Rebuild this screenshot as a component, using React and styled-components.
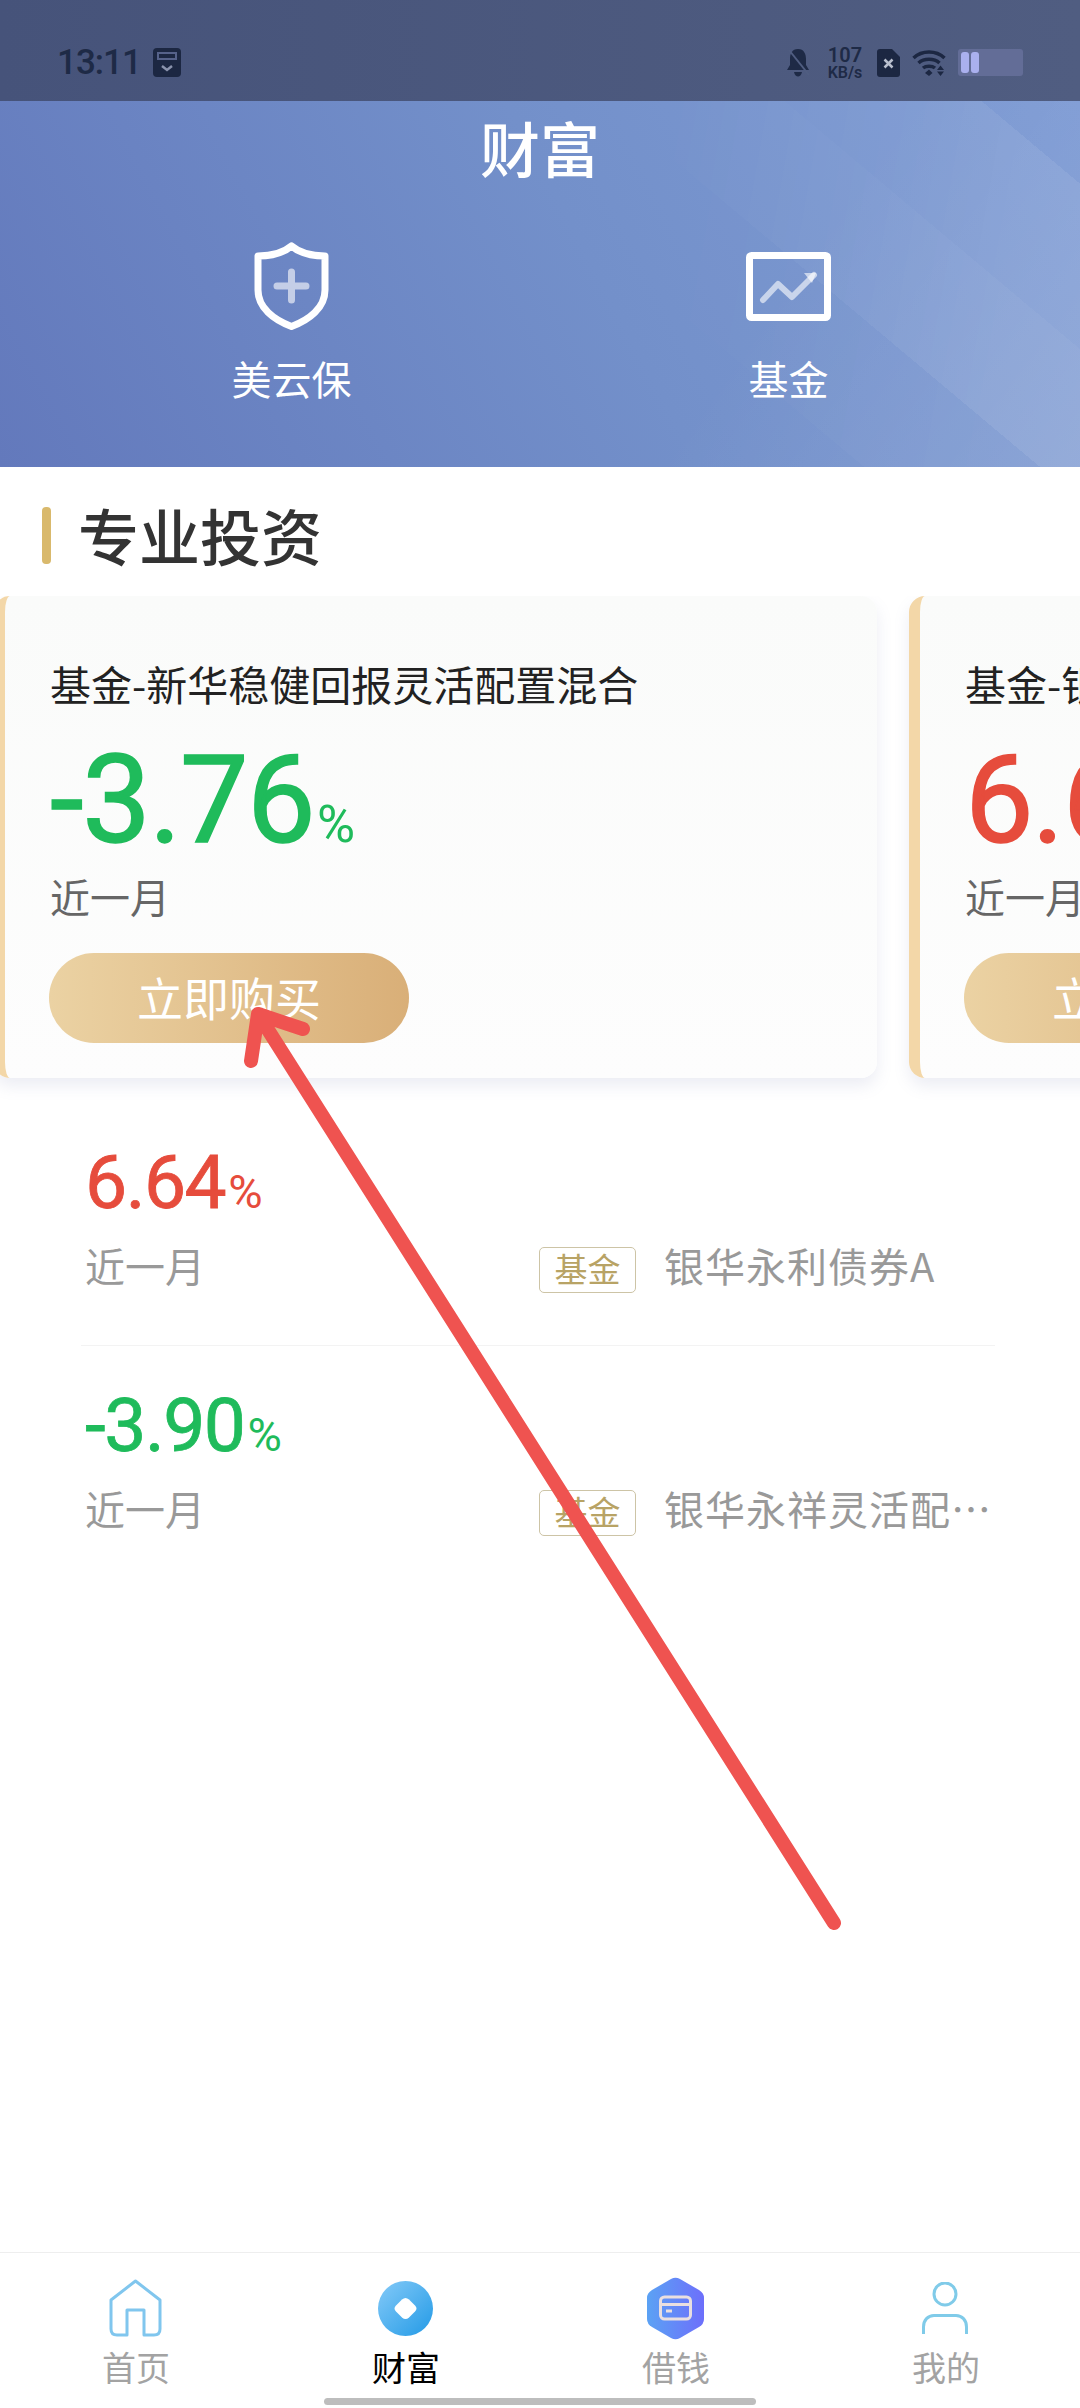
import React from 'react';
import styled, { createGlobalStyle } from 'styled-components';

const cjk = '"Noto Sans CJK SC", "Noto Sans", sans-serif';
const num = 'Roboto, "Liberation Sans", sans-serif';

const GlobalStyle = createGlobalStyle`
  html, body { margin: 0; padding: 0; background: #fff; }
  * { box-sizing: border-box; }
`;

const Page = styled.div`
  position: relative;
  width: 1080px;
  height: 2408px;
  overflow: hidden;
  display: flex;
  flex-direction: column;
  background: #fff;
  font-family: ${cjk};
`;

const StatusBar = styled.div`
  height: 101px;
  flex: none;
  padding: 26px 57px 0;
  display: flex;
  justify-content: space-between;
  align-items: center;
  background: linear-gradient(90deg, #46537a 0%, #505d81 100%);
  & > div { display: flex; align-items: center; }
  padding-bottom: 2px;
`;

const Time = styled.span`
  font: 500 35px ${num};
  letter-spacing: -1px;
  color: #1e2a46;
  margin-right: 12px;
`;

const StatusRight = styled.div`
  gap: 12px;
`;

const Speed = styled.div`
  display: flex;
  flex-direction: column;
  align-items: center;
  width: 40px;
  margin-left: 3px;
  color: #1e2a46;
  font-family: ${num};
  font-weight: 600;
  & b { font-size: 20px; line-height: 19px; font-weight: 600; }
  & i { font-size: 16px; line-height: 15px; font-style: normal; }
`;

const Battery = styled.div`
  width: 65px;
  height: 27px;
  padding-left: 3px;
  display: flex;
  align-items: center;
  gap: 2px;
  border-radius: 3px;
  background: #636d97;
`;

const BatteryCell = styled.span`
  width: 8px;
  height: 21px;
  border-radius: 3px;
  background: #aab0ee;
`;

const Header = styled.header`
  position: relative;
  height: 366px;
  flex: none;
  padding-top: 11px;
  color: #fff;
  background:
    linear-gradient(125deg, rgba(255, 255, 255, 0) 68%, rgba(255, 255, 255, 0.1) 100%),
    linear-gradient(62deg, #6379bc 0%, #7390ca 55%, #7e9bd4 100%);

  /* diagonal light bands, fading out towards the top left */
  &::before {
    content: '';
    position: absolute;
    inset: 0;
    background: linear-gradient(40deg,
      transparent 57%,
      rgba(255, 255, 255, 0.035) 57%, rgba(255, 255, 255, 0.035) 68.6%,
      rgba(255, 255, 255, 0.11) 68.6%, rgba(255, 255, 255, 0.11) 80.5%,
      rgba(255, 255, 255, 0.08) 80.5%, rgba(255, 255, 255, 0.08) 93.5%,
      transparent 93.5%);
    mask-image: linear-gradient(100deg, transparent 58%, #000 92%);
  }
  & > * { position: relative; }
`;

const Title = styled.h1`
  margin: 0;
  font-size: 60px;
  font-weight: 500;
  line-height: 70px;
  text-align: center;
`;

const Shortcuts = styled.div`
  margin-top: 60px;
  padding: 0 43px;
  display: grid;
  grid-template-columns: 1fr 1fr;
`;

const Shortcut = styled.div`
  display: flex;
  flex-direction: column;
  align-items: center;
`;

const ShortcutIcon = styled.div`
  height: 88px;
  display: flex;
  align-items: center;
`;

const ShortcutLabel = styled.span`
  margin-top: 23px;
  font-size: 40px;
  line-height: 50px;
`;

const SectionHead = styled.div`
  margin-top: 40px;
  padding-left: 42px;
  height: 57px;
  display: flex;
  align-items: center;
  gap: 27px;
`;

const SectionBar = styled.span`
  width: 9px;
  height: 57px;
  border-radius: 4px;
  background: #d9b96c;
`;

const SectionTitle = styled.h2`
  margin: 0 0 3px;
  font-size: 61px;
  font-weight: 500;
  line-height: 57px;
  color: #333;
`;

const Scroller = styled.div`
  margin: 32px 0 0 -6px;
  padding-bottom: 25px;
  display: flex;
  gap: 32px;
  overflow: hidden;
`;

const Card = styled.div`
  flex: none;
  width: 883px;
  height: 482px;
  padding: 59px 0 0 45px;
  border-left: 11px solid #f3d7a8;
  border-radius: 16px;
  background: linear-gradient(180deg, #fafbfa 0%, #fdfdfd 100%);
  box-shadow: 0 8px 16px rgba(120, 130, 175, 0.14);
`;

const CardTitle = styled.div`
  font-size: 41px;
  line-height: 56px;
  white-space: nowrap;
  color: #222;
`;

const BigRate = styled.div`
  margin-top: 35px;
  height: 110px;
  font-family: ${num};
  font-size: 122px;
  font-weight: 400;
  line-height: 110px;
  letter-spacing: -1.5px;
  white-space: nowrap;
  -webkit-text-stroke: 1.5px currentColor;
  color: ${({ $color }) => $color};
  & small {
    font-size: 52px;
    letter-spacing: 0;
    margin-left: 3px;
    -webkit-text-stroke: 0;
  }
`;

const CardPeriod = styled.div`
  margin-top: 15px;
  font-size: 40px;
  line-height: 50px;
  color: #666;
`;

const BuyButton = styled.div`
  margin: 32px 0 0 -1px;
  width: 360px;
  height: 90px;
  padding-bottom: 5px;
  display: flex;
  align-items: center;
  justify-content: center;
  border-radius: 45px;
  font-size: 46px;
  color: #fff;
  background: linear-gradient(90deg, #ebd2a3 0%, #d9af78 100%);
`;

const List = styled.div`
  margin: 0 85px 0 81px;
`;

const Row = styled.div`
  padding: 44px 0 53px 4px;
  border-bottom: ${({ $last }) => ($last ? 'none' : '1px solid #f3f3f3')};
`;

const RowRate = styled.div`
  height: 70px;
  font-family: ${num};
  font-size: 75px;
  font-weight: 400;
  line-height: 70px;
  letter-spacing: -1.5px;
  -webkit-text-stroke: 0.8px currentColor;
  color: ${({ $color }) => $color};
  & small {
    font-size: 47px;
    letter-spacing: 0;
    margin-left: 3px;
    -webkit-text-stroke: 0;
  }
`;

const RowLower = styled.div`
  margin-top: 25px;
  height: 50px;
  display: flex;
  align-items: center;
`;

const RowPeriod = styled.span`
  flex: 0 0 454px;
  margin-bottom: 5px;
  font-size: 40px;
  line-height: 50px;
  color: #999;
`;

const Tag = styled.span`
  flex: none;
  width: 97px;
  height: 46px;
  margin-top: 5px;
  padding-bottom: 3px;
  display: flex;
  align-items: center;
  justify-content: center;
  border: 1.5px solid #cdc4a6;
  border-radius: 5px;
  font-size: 33px;
  color: #b8a365;
`;

const RowName = styled.span`
  margin: 0 0 5px 28px;
  width: 330px;
  overflow: hidden;
  white-space: nowrap;
  text-overflow: ellipsis;
  font-size: 40px;
  letter-spacing: 1px;
  line-height: 50px;
  color: #999;
`;

const Spacer = styled.div`
  flex: 1;
`;

const TabBar = styled.nav`
  flex: none;
  height: 156px;
  border-top: 1px solid #eee;
  padding-top: 23px;
  display: flex;
  flex-direction: column;
`;

const Tabs = styled.div`
  display: grid;
  grid-template-columns: repeat(4, 1fr);
`;

const Tab = styled.div`
  display: flex;
  flex-direction: column;
  align-items: center;
`;

const TabIcon = styled.div`
  height: 64px;
  display: flex;
  align-items: center;
`;

const TabLabel = styled.span`
  margin: 7px 0 0 2px;
  height: 41px;
  font-size: 34px;
  line-height: 40px;
  color: ${({ $active }) => ($active ? '#000' : '#a3a3a3')};
`;

const HomeIndicator = styled.div`
  margin: 10px auto 0;
  width: 432px;
  height: 7px;
  border-radius: 4px;
  background: #bdbdbd;
`;

// red hand drawn annotation on top of the screenshot
const Annotation = styled.svg`
  position: absolute;
  top: 0;
  left: 0;
  pointer-events: none;
`;

const GREEN = '#1fbb5b';
const RED = '#e64c3c';

const cards = [
  { title: '基金-新华稳健回报灵活配置混合', rate: '-3.76', color: GREEN },
  { title: '基金-银华永利债券A', rate: '6.64', color: RED },
];

const rows = [
  { rate: '6.64', color: RED, name: '银华永利债券A' },
  { rate: '-3.90', color: GREEN, name: '银华永祥灵活配置混合' },
];

const ShieldIcon = () => (
  <svg width="75" height="88" viewBox="0 0 75 88" fill="none">
    <path d="M37.5 4C30 10.5 17 14 4 14V48C4 66 20 78 37.5 84.5C55 78 71 66 71 48V14C58 14 45 10.5 37.5 4Z" stroke="#fff" strokeWidth="7" strokeLinejoin="round" />
    <path d="M37.5 30V58M23 44H52" stroke="#fff" strokeOpacity="0.6" strokeWidth="7" strokeLinecap="round" />
  </svg>
);

const FundIcon = () => (
  <svg width="85" height="69" viewBox="0 0 85 69" fill="none">
    <rect x="3.5" y="3.5" width="78" height="62" rx="2" stroke="#fff" strokeWidth="7" />
    <path d="M17 48L32 32L46 45L68 23" stroke="#fff" strokeOpacity="0.6" strokeWidth="6" strokeLinecap="round" strokeLinejoin="round" />
    <path d="M58 21H70L66 31Z" fill="#fff" fillOpacity="0.6" />
  </svg>
);

const HomeIcon = () => (
  <svg width="53" height="58" viewBox="0 0 53 58" fill="none">
    <path d="M26.5 2L2 21V50C2 54 4 56 8 56H18V31H35V56H45C49 56 51 54 51 50V21Z" stroke="#80c6ee" strokeWidth="3" strokeLinejoin="round" />
  </svg>
);

const WealthIcon = () => (
  <svg width="55" height="55" viewBox="0 0 55 55">
    <defs>
      <linearGradient id="wealthFill" x1="0" y1="0" x2="1" y2="1">
        <stop offset="0" stopColor="#84caf8" />
        <stop offset="1" stopColor="#239ae6" />
      </linearGradient>
    </defs>
    <circle cx="27.5" cy="27.5" r="27.5" fill="url(#wealthFill)" />
    <path d="M24 18.5Q27.5 15.5 31 18.5L37 24.5Q40 27.5 37 30.5L31 36.5Q27.5 39.5 24 36.5L18 30.5Q15 27.5 18 24.5Z" fill="#fff" />
  </svg>
);

const BorrowIcon = () => (
  <svg width="57" height="63" viewBox="0 0 57 63" fill="none">
    <defs>
      <linearGradient id="borrowFill" x1="0" y1="0" x2="1" y2="0">
        <stop offset="0" stopColor="#5ba2f4" />
        <stop offset="1" stopColor="#6d6ffb" />
      </linearGradient>
    </defs>
    <path d="M24 2Q28.5 -0.5 33 2L52 13Q57 16 57 21V42Q57 47 52 50L33 61Q28.5 63.5 24 61L5 50Q0 47 0 42V21Q0 16 5 13Z" fill="url(#borrowFill)" />
    <rect x="13.5" y="20" width="30" height="22" rx="4" stroke="#e9dfe0" strokeWidth="3" />
    <path d="M13.5 27.5H43.5" stroke="#e9dfe0" strokeWidth="3" />
    <path d="M19 34H25" stroke="#e9dfe0" strokeWidth="3" />
  </svg>
);

const MeIcon = () => (
  <svg width="46" height="53" viewBox="0 0 46 53" fill="none">
    <circle cx="23" cy="12" r="11" stroke="#80cbe9" strokeWidth="3" />
    <path d="M1.5 52V45C1.5 38 6 33.5 12 33.5H34C40 33.5 44.5 38 44.5 45V52" stroke="#80cbe9" strokeWidth="3" />
  </svg>
);

const CalendarGlyph = () => (
  <svg width="28" height="29" viewBox="0 0 28 29">
    <rect width="28" height="29" rx="4" fill="#1c2742" />
    <path d="M5 5H23V11H5Z" fill="none" stroke="#56628a" strokeWidth="2" />
    <path d="M9 18L14 22L19 18" fill="none" stroke="#8a93ad" strokeWidth="2.5" />
  </svg>
);

const BellOff = () => (
  <svg width="24" height="29" viewBox="0 0 24 29">
    <path d="M12 1C6 1 4 6 4 11V17L1 22H23L20 17V11C20 6 18 1 12 1Z" fill="#1e2a46" />
    <path d="M8 24H16C15.5 27 13.5 28.5 12 28.5C10.5 28.5 8.5 27 8 24Z" fill="#1e2a46" />
    <path d="M3 2L23 27" stroke="#505d81" strokeWidth="2" />
  </svg>
);

const SimGlyph = () => (
  <svg width="23" height="28" viewBox="0 0 23 28">
    <path d="M3 0H15L23 8V25Q23 28 20 28H3Q0 28 0 25V3Q0 0 3 0Z" fill="#1c2742" />
    <path d="M7.5 10.5L15.5 18.5M15.5 10.5L7.5 18.5" stroke="#b9bfce" strokeWidth="2.5" />
  </svg>
);

const WifiGlyph = () => (
  <svg width="34" height="27" viewBox="0 0 34 27" fill="none">
    <path d="M1.5 9C10 1 24 1 32.5 9" stroke="#1c2742" strokeWidth="3.5" />
    <path d="M6.5 14C12 9 22 9 27.5 14" stroke="#1c2742" strokeWidth="3.5" />
    <path d="M11 19C14 16.5 20 16.5 23 19" stroke="#1c2742" strokeWidth="3.5" />
    <path d="M13 24L17 20.5L20.5 24L17 27Z" fill="#1c2742" />
    <path d="M25 21H32L28.5 16.5Z M25 22.5H32L28.5 27Z" fill="#1c2742" />
  </svg>
);

function App() {
  return (
    <Page>
      <GlobalStyle />
      <StatusBar>
        <div>
          <Time>13:11</Time>
          <CalendarGlyph />
        </div>
        <StatusRight>
          <BellOff />
          <Speed><b>107</b><i>KB/s</i></Speed>
          <SimGlyph />
          <WifiGlyph />
          <Battery>
            <BatteryCell />
            <BatteryCell />
          </Battery>
        </StatusRight>
      </StatusBar>

      <Header>
        <Title>财富</Title>
        <Shortcuts>
          <Shortcut>
            <ShortcutIcon><ShieldIcon /></ShortcutIcon>
            <ShortcutLabel>美云保</ShortcutLabel>
          </Shortcut>
          <Shortcut>
            <ShortcutIcon><FundIcon /></ShortcutIcon>
            <ShortcutLabel>基金</ShortcutLabel>
          </Shortcut>
        </Shortcuts>
      </Header>

      <SectionHead>
        <SectionBar />
        <SectionTitle>专业投资</SectionTitle>
      </SectionHead>

      <Scroller>
        {cards.map((c) => (
          <Card key={c.title}>
            <CardTitle>{c.title}</CardTitle>
            <BigRate $color={c.color}>{c.rate}<small>%</small></BigRate>
            <CardPeriod>近一月</CardPeriod>
            <BuyButton>立即购买</BuyButton>
          </Card>
        ))}
      </Scroller>

      <List>
        {rows.map((r, i) => (
          <Row key={r.name} $last={i === rows.length - 1}>
            <RowRate $color={r.color}>{r.rate}<small>%</small></RowRate>
            <RowLower>
              <RowPeriod>近一月</RowPeriod>
              <Tag>基金</Tag>
              <RowName>{r.name}</RowName>
            </RowLower>
          </Row>
        ))}
      </List>

      <Spacer />

      <TabBar>
        <Tabs>
          <Tab><TabIcon><HomeIcon /></TabIcon><TabLabel>首页</TabLabel></Tab>
          <Tab><TabIcon><WealthIcon /></TabIcon><TabLabel $active>财富</TabLabel></Tab>
          <Tab><TabIcon><BorrowIcon /></TabIcon><TabLabel>借钱</TabLabel></Tab>
          <Tab><TabIcon><MeIcon /></TabIcon><TabLabel>我的</TabLabel></Tab>
        </Tabs>
        <HomeIndicator />
      </TabBar>

      <Annotation width="1080" height="2408" viewBox="0 0 1080 2408" fill="none">
        <path d="M834 1923L258 1014M251 1061L258 1014L303 1029" stroke="#ef5350" strokeWidth="14" strokeLinecap="round" strokeLinejoin="round" />
      </Annotation>
    </Page>
  );
}

export default App;
